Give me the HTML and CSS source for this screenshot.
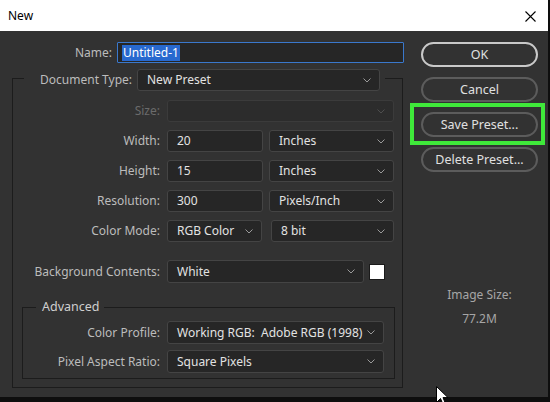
FILE: index.html
```html
<!DOCTYPE html>
<html lang="en">
<head>
<meta charset="utf-8">
<title>New</title>
<link rel="stylesheet" href="styles.css">
</head>
<body>
<div class="screen">
  <div class="window">
    <div class="titlebar">
      <span class="title">New</span>
      <svg class="close" width="11" height="11" viewBox="0 0 11 11"><path d="M0.5 0.5 L10.5 10.5 M10.5 0.5 L0.5 10.5" stroke="#000" stroke-width="1.1" fill="none"/></svg>
    </div>
    <div class="body">
      <div class="main">
        <div class="name-row">
          <span class="lbl name-lbl">Name:</span>
          <div class="field text focused"><span class="sel">Untitled-1</span></div>
        </div>
        <fieldset class="group">
          <legend class="legend-doc">
            <div class="doc-row">
              <span class="lbl doc-lbl">Document Type:</span>
              <div class="field select doc-select"><span>New Preset</span><svg class="chev" width="8" height="5" viewBox="0 0 8 5"><path d="M0.5 0.5 L4 4 L7.5 0.5" stroke="#9a9a9a" fill="none"/></svg></div>
            </div>
          </legend>
          <div class="grid">
            <span class="lbl dis">Size:</span>
            <div class="field select disabled"><span></span><svg class="chev" width="8" height="5" viewBox="0 0 8 5"><path d="M0.5 0.5 L4 4 L7.5 0.5" stroke="#4e4e4e" fill="none"/></svg></div>

            <span class="lbl">Width:</span>
            <div class="pair">
              <div class="field text num">20</div>
              <div class="field select unit"><span>Inches</span><svg class="chev" width="8" height="5" viewBox="0 0 8 5"><path d="M0.5 0.5 L4 4 L7.5 0.5" stroke="#9a9a9a" fill="none"/></svg></div>
            </div>

            <span class="lbl">Height:</span>
            <div class="pair">
              <div class="field text num">15</div>
              <div class="field select unit"><span>Inches</span><svg class="chev" width="8" height="5" viewBox="0 0 8 5"><path d="M0.5 0.5 L4 4 L7.5 0.5" stroke="#9a9a9a" fill="none"/></svg></div>
            </div>

            <span class="lbl">Resolution:</span>
            <div class="pair">
              <div class="field text num">300</div>
              <div class="field select unit"><span>Pixels/Inch</span><svg class="chev" width="8" height="5" viewBox="0 0 8 5"><path d="M0.5 0.5 L4 4 L7.5 0.5" stroke="#9a9a9a" fill="none"/></svg></div>
            </div>

            <span class="lbl">Color Mode:</span>
            <div class="pair mode">
              <div class="field select cmode"><span>RGB Color</span><svg class="chev" width="8" height="5" viewBox="0 0 8 5"><path d="M0.5 0.5 L4 4 L7.5 0.5" stroke="#9a9a9a" fill="none"/></svg></div>
              <div class="field select bits"><span>8 bit</span><svg class="chev" width="8" height="5" viewBox="0 0 8 5"><path d="M0.5 0.5 L4 4 L7.5 0.5" stroke="#9a9a9a" fill="none"/></svg></div>
            </div>

            <span class="lbl bg-lbl">Background Contents:</span>
            <div class="pair bg-pair">
              <div class="field select bg-select"><span>White</span><svg class="chev" width="8" height="5" viewBox="0 0 8 5"><path d="M0.5 0.5 L4 4 L7.5 0.5" stroke="#9a9a9a" fill="none"/></svg></div>
              <div class="swatch"></div>
            </div>
          </div>

          <fieldset class="adv">
            <legend class="legend-adv">Advanced</legend>
            <div class="grid adv-grid">
              <span class="lbl">Color Profile:</span>
              <div class="field select"><span>Working RGB:&nbsp; Adobe RGB (1998)</span><svg class="chev" width="8" height="5" viewBox="0 0 8 5"><path d="M0.5 0.5 L4 4 L7.5 0.5" stroke="#9a9a9a" fill="none"/></svg></div>
              <span class="lbl">Pixel Aspect Ratio:</span>
              <div class="field select"><span>Square Pixels</span><svg class="chev" width="8" height="5" viewBox="0 0 8 5"><path d="M0.5 0.5 L4 4 L7.5 0.5" stroke="#9a9a9a" fill="none"/></svg></div>
            </div>
          </fieldset>
        </fieldset>
      </div>
      <div class="side">
        <div class="btn primary">OK</div>
        <div class="btn">Cancel</div>
        <div class="btn highlighted">Save Preset...</div>
        <div class="btn">Delete Preset...</div>
        <div class="img-size">
          <div class="img-lbl">Image Size:</div>
          <div class="img-val">77.2M</div>
        </div>
      </div>
    </div>
  </div>
  <svg class="cursor" width="13" height="20" viewBox="0 0 13 20"><path d="M0.5 0.5 L0.5 16.5 L4.5 12.5 L7.2 18.8 L9.6 17.8 L7 11.6 L12 11.6 Z" fill="#fff" stroke="#000" stroke-width="1"/></svg>
</div>
</body>
</html>
```

FILE: styles.css
```css
* { box-sizing: border-box; }
html, body { margin: 0; padding: 0; }
body {
  background: #0e0e0e;
  font-family: "Noto Sans", "Open Sans", "DejaVu Sans", sans-serif;
  font-size: 12px;
}
.screen {
  position: relative;
  width: 550px;
  height: 402px;
  overflow: hidden;
  background: #0e0e0e;
}
.window {
  width: 548px;
  height: 397px;
  background: #323232;
  display: flex;
  flex-direction: column;
}
.titlebar {
  height: 31px;
  background: #ffffff;
  display: flex;
  align-items: center;
  padding: 0 12px 0 8px;
  flex: none;
}
.title {
  color: #000;
  font-size: 12px;
  line-height: 16px;
  margin-top: 1px;
}
.close { margin-left: auto; margin-top: 1px; }

.body {
  flex: 1;
  display: flex;
}
.main {
  width: 404px;
  padding: 11px 0 0 12px;
}
.side {
  width: 144px;
  padding: 11px 0 0 17px;
  display: flex;
  flex-direction: column;
  gap: 10px;
}

.lbl {
  color: #bcbcbc;
  text-align: right;
  white-space: nowrap;
  line-height: 16px;
}
.lbl.dis { color: #6b6b6b; }

.name-row {
  display: flex;
  align-items: center;
  gap: 5px;
  height: 21px;
}
.name-lbl { width: 100px; }

.field {
  height: 22px;
  background: #262626;
  border: 1px solid #444444;
  border-radius: 3px;
  color: #e2e2e2;
  display: flex;
  align-items: center;
  padding: 0 8px 0 9px;
  white-space: nowrap;
  line-height: 16px;
}
.field.text.focused {
  flex: 1;
  height: 21px;
  border-color: #3a78cc;
  border-radius: 1px;
  padding-left: 4px;
}
.sel {
  background: #2869cf;
  color: #ffffff;
  padding: 0 1px;
}
.select .chev { margin-left: auto; flex: none; }
.select.disabled { background: #2c2c2c; border-color: #3b3b3b; }

.group {
  margin: 2px 1px 0 0;
  padding: 0 8px 8px 0;
  border: 1px solid #1c1c1c;
  min-width: 0;
}
.legend-doc {
  padding: 4px 5px 0 16px;
  margin-left: 11px;
}
.doc-row {
  display: flex;
  align-items: center;
  gap: 5px;
}
.doc-lbl { width: 92px; }
.doc-select { width: 243px; }

.grid {
  display: grid;
  grid-template-columns: 147px 227px;
  column-gap: 7px;
  row-gap: 8px;
  align-items: center;
  margin-top: 9px;
}
.pair {
  display: flex;
  gap: 6px;
}
.num { width: 96px; }
.unit { flex: 1; }
.pair.mode { gap: 9px; }
.cmode { width: 95px; }
.bits { flex: 1; }
.bg-lbl, .bg-pair { margin-top: 10px; }
.bg-pair { align-items: center; gap: 5px; }
.bg-select { width: 197px; height: 23px; }
.swatch {
  width: 16px;
  height: 16px;
  background: #ffffff;
  border: 1px solid #1a1a1a;
  flex: none;
}

.adv {
  margin: 16px -1px 0 9px;
  padding: 0 10px 5px 0;
  border: 1px solid #1c1c1c;
  min-width: 0;
}
.legend-adv {
  margin-left: 13px;
  padding: 0 4px 0 6px;
  color: #cfcfcf;
  font-size: 12.5px;
  line-height: 16px;
}
.adv-grid {
  grid-template-columns: 137px 217px;
  row-gap: 6px;
  margin-top: 6px;
}
.adv-grid .field { height: 23px; }

.btn {
  width: 117px;
  height: 25px;
  border: 2px solid #5c5c5c;
  border-radius: 13px;
  color: #e0e0e0;
  font-size: 12.5px;
  display: flex;
  align-items: center;
  justify-content: center;
  position: relative;
  flex: none;
}
.btn.primary { border-color: #c9c9c9; }
.btn.highlighted::after {
  content: "";
  position: absolute;
  left: -13px;
  right: -9px;
  top: -11px;
  bottom: -10px;
  border: 4px solid #3fe93a;
}
.img-size {
  margin-top: 105px;
  width: 117px;
  text-align: center;
  color: #a6a6a6;
  font-size: 12px;
  line-height: 16px;
}
.img-val { margin-top: 8px; }

.cursor {
  position: absolute;
  left: 436px;
  top: 386px;
}
```
